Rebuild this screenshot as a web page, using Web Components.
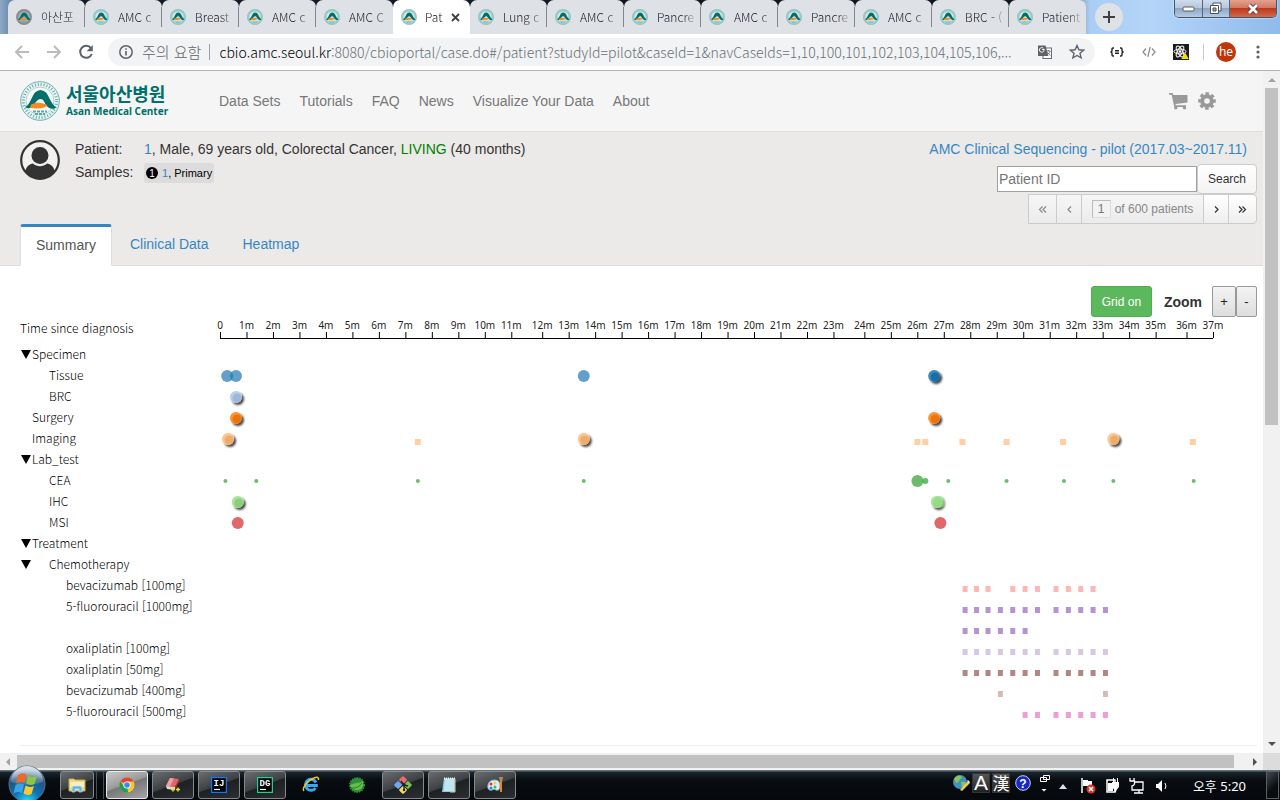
<!DOCTYPE html>
<html lang="ko">
<head>
<meta charset="utf-8">
<title>Patient 1 - cBioPortal</title>
<style>
html, body { margin: 0; height: 100%; overflow: hidden; }
body { font-family: "Liberation Sans", Arial, sans-serif; font-size: 14px; color: #333; }
</style>
</head>
<body>
<desktop-window></desktop-window>

<script>
const UI_FONT = '"Noto Sans", "Noto Sans CJK KR", sans-serif';
const KO_FONT = '"Noto Sans CJK KR", sans-serif';

function define(name, build) {
  customElements.define(name, class extends HTMLElement {
    constructor() {
      super();
      this.attachShadow({ mode: 'open' });
    }
    connectedCallback() {
      const t = document.createElement('template');
      t.innerHTML = '<style>*{box-sizing:border-box}svg{display:block;flex:none}</style>' + build(this);
      this.shadowRoot.replaceChildren(t.content.cloneNode(true));
    }
  });
}

/* ---------- hospital emblem ---------- */
define('amc-emblem', el => {
  const large = el.hasAttribute('large'), grey = el.hasAttribute('grey');
  return `
<style>:host{display:block;flex:none;width:16px;height:16px}:host([large]){width:40px;height:40px}svg{width:100%;height:100%}</style>
<svg viewBox="0 0 40 40" aria-hidden="true">
  <circle cx="20" cy="20" r="19.300" fill="${grey ? '#8f8f8f' : large ? '#eef5f4' : '#a9d0ce'}" stroke="${grey ? '#777' : '#6bb0ad'}" stroke-width="1"/>
  <circle cx="20" cy="20" r="16.600" fill="none" stroke="#3f9a97" stroke-width="3" stroke-dasharray="1.200 1.700" opacity="${large ? '.7' : '.25'}"/>
  <circle cx="20" cy="20" r="14" fill="${grey ? '#aaa' : large ? '#f5f8f8' : '#dcebea'}" stroke="#8cc3c0" stroke-width=".7"/>
  <path d="M13 30.500h14M15 33h10" stroke="#5aaba7" stroke-width="1.800" stroke-dasharray="3 1"/>
  <path d="M5 26C10 24 12 15 15 11.500Q20.500 6.500 26 11.500C29 15 31 23 36 26L35 27.500C31 28.500 28 27 26 24C24 21 23.500 18 20.500 18C17 18 15.500 22 13 25C11 27.500 8 28 5 26Z" fill="#00706c"/>
  <path d="M11 23.500C16 21 23 21 27.500 24.500C25 27.500 17 28 10 27Z" fill="#f58a1f"/>
</svg>`;
});

/* ---------- browser tab ---------- */
define('browser-tab', el => {
  const active = el.hasAttribute('active');
  return `
<style>
:host{display:block;flex:0 1 77px;min-width:0;height:34px}
.tab{height:34px;display:flex;align-items:center;gap:${active ? 8 : 9}px;padding:0 0 0 8px;border-radius:7px 7px 0 0;background:${active ? '#fff' : '#dee1e6'};position:relative;font:300 12px/16px ${KO_FONT};color:#202124}
.t{flex:1;min-width:0;white-space:nowrap;-webkit-mask-image:linear-gradient(90deg,#000 ${active ? 20 : 26}px,transparent 42px)}
.sep{position:absolute;right:0;top:7px;width:1px;height:20px;background:#80868b}
button{flex:none;border:0;background:none;padding:0;width:16px;height:16px;margin-right:7px;margin-left:-4px;display:grid;place-items:center}
</style>
<div class="tab" role="tab"><amc-emblem ${el.hasAttribute('grey') ? 'grey' : ''}></amc-emblem><span class="t"><slot></slot></span>
${active ? '<button aria-label="Close tab"><svg width="9" height="9" viewBox="0 0 9 9"><path d="M1 1l7 7M8 1l-7 7" stroke="#3c4043" stroke-width="1.800"/></svg></button>' : ''}
${el.hasAttribute('sep') ? '<i class="sep"></i>' : ''}</div>`;
});

define('tab-strip', () => {
  const tabs = ['아산포', 'AMC c', 'Breast', 'AMC c', 'AMC C', 'Pat', 'Lung c', 'AMC c', 'Pancre', 'AMC c', 'Pancre', 'AMC c', 'BRC - (', 'Patient'];
  return `
<style>
:host{display:flex;height:34px;flex:none;padding-left:8px;background:linear-gradient(90deg,#8ba8c8 0,#5c7898 16px,#141c2a 60px,#10141e 1040px,#a9cdf4 1090px,#b4d5f8 1150px,#8fbbea 100%)}
.new{width:28px;height:28px;border-radius:50%;border:0;background:#dee1e6;margin:3px 0 0 9px;padding:0;display:grid;place-items:center;flex:none}
.win{margin-left:auto;margin-right:3px;display:flex;height:18px;border:1px solid #45566b;border-top:0;border-radius:0 0 5px 5px;overflow:hidden;box-shadow:0 0 2px #fff}
.win button{border:0;border-right:1px solid #56677b;padding:0;display:grid;place-items:center;background:linear-gradient(#cfdceb,#b7c8dc 45%,#8fa7c2 50%,#b3cbe5)}
.win button:nth-child(1){width:28px}
.win button:nth-child(2){width:27px}
.win .x{width:46px;border-right:0;background:linear-gradient(#e3a18f,#d27a63 45%,#bb3a1b 50%,#d4684a)}
</style>
${tabs.map((t, i) => `<browser-tab ${i === 5 ? 'active' : ''} ${i === 0 ? 'grey' : ''} ${[4, 5, 13].includes(i) ? '' : 'sep'}>${t}</browser-tab>`).join('')}
<button class="new" aria-label="New tab"><svg width="14" height="14" viewBox="0 0 14 14"><path d="M7 1v12M1 7h12" stroke="#3c4043" stroke-width="2"/></svg></button>
<div class="win">
<button aria-label="Minimize"><svg width="14" height="6" viewBox="0 0 14 6"><rect x="1" y="1" width="11" height="4" rx="1" fill="#fff" stroke="#555c6b"/></svg></button>
<button aria-label="Restore"><svg width="14" height="13" viewBox="0 0 14 13"><g fill="#fff" stroke="#4b5363"><path d="M4 1h8v8h-8z"/><path d="M1.500 3.500h8v8h-8z"/><path d="M4 6h3v3h-3z" fill="#8fa7c2"/></g></svg></button>
<button class="x" aria-label="Close"><svg width="14" height="12" viewBox="0 0 14 12"><path d="M3 2l8 8M11 2l-8 8" stroke="#5b3038" stroke-width="4.500"/><path d="M3 2l8 8M11 2l-8 8" stroke="#fff" stroke-width="2.800"/></svg></button>
</div>`;
});

/* ---------- address bar ---------- */
define('address-bar', () => `
<style>
:host{display:flex;align-items:center;height:37px;flex:none;background:#fff;border-bottom:1px solid #b3b3b3;padding:0 12px 0 12px}
button{border:0;background:none;padding:0;width:20px;height:20px;display:grid;place-items:center;flex:none}
.nav{display:flex;gap:12px;margin-right:12px}
.box{flex:1;min-width:0;height:28px;border-radius:14px;background:#f1f3f4;display:flex;align-items:center;padding:0 8px 0 9px;font:300 14px/18px ${KO_FONT};color:#6b7075;white-space:nowrap}
.warn{font:300 15px/18px ${KO_FONT};margin-left:7px;color:#5f6368}
.bar{width:1px;height:16px;background:#9aa0a6;margin:0 9px 0 8px}
.url{flex:1;min-width:0;color:#6b7075;text-decoration:none}
.url b{font-weight:300;color:#000}
.in{display:flex;gap:12px;margin-left:12px}
.ext{display:flex;align-items:center;gap:12px;margin-left:12px}
.v{width:1px;height:16px;background:#ccc}
.ava{width:20px;height:20px;border-radius:50%;background:#bf360c;color:#fff;font:12px/20px ${UI_FONT};display:block;text-align:center}
</style>
<div class="nav">
<button aria-label="Back"><svg width="16" height="14" viewBox="0 0 16 14"><path d="M15 7H2M8 1L2 7l6 6" fill="none" stroke="#b9bbbe" stroke-width="2"/></svg></button>
<button aria-label="Forward"><svg width="16" height="14" viewBox="0 0 16 14"><path d="M1 7h13M8 1l6 6-6 6" fill="none" stroke="#b9bbbe" stroke-width="2"/></svg></button>
<button aria-label="Reload"><svg width="16" height="16" viewBox="0 0 16 16"><path d="M13 4.200A6 6 0 1 0 13.800 10" fill="none" stroke="#5f6368" stroke-width="2"/><path d="M14.800 1v6.200H8.600z" fill="#5f6368"/></svg></button>
</div>
<div class="box">
<svg width="18" height="18" viewBox="0 0 18 18"><circle cx="9" cy="9" r="6.200" fill="none" stroke="#5f6368" stroke-width="1.500"/><path d="M9 8v4.500M9 5.200v1.600" stroke="#5f6368" stroke-width="1.600"/></svg>
<span class="warn">주의 요함</span><i class="bar"></i>
<a class="url" href="#"><b>cbio.amc.seoul.kr</b>:8080/cbioportal/case.do#/patient?studyId=pilot&amp;caseId=1&amp;navCaseIds=1,10,100,101,102,103,104,105,106,...</a>
<div class="in">
<button aria-label="Translate"><svg width="16" height="16" viewBox="0 0 16 16"><rect x="6" y="4" width="8.500" height="10.500" fill="#fff" stroke="#6b6f74"/><path d="M1 1.500h7.500l3 10.500H1z" fill="#5f6368"/><path d="M7.500 5.500H5.200M7 5.500A2.300 2.300 0 1 1 6.300 4.200" fill="none" stroke="#fff"/><path d="M9.500 7h4M11.500 6v1M13 7c-.5 2-1.500 3-3 4M10.500 8.500l3 3" stroke="#6b6f74" fill="none" stroke-width=".9"/></svg></button>
<button aria-label="Bookmark"><svg width="16" height="16" viewBox="0 0 16 16"><path d="M8 1.500l1.900 4.300 4.700.4-3.600 3.100 1.100 4.600L8 11.500l-4.100 2.400L5 9.300 1.400 6.200l4.700-.4z" fill="none" stroke="#5f6368" stroke-width="1.400"/></svg></button>
</div>
</div>
<div class="ext">
<button aria-label="JSON viewer"><svg width="14" height="10" viewBox="0 0 14 10"><path d="M4 1H3q-1 0-1 1v2L1 5l1 1v2q0 1 1 1h1M10 1h1q1 0 1 1v2l1 1-1 1v2q0 1-1 1h-1M5 3.700h4M5 6.300h4" fill="none" stroke="#222" stroke-width="1.400"/></svg></button>
<button aria-label="Source"><svg width="14" height="10" viewBox="0 0 14 10"><path d="M4 1.500L1 5l3 3.500M10 1.500L13 5l-3 3.500M8.200 0L5.800 10" fill="none" stroke="#888" stroke-width="1.200"/></svg></button>
<button aria-label="React tools"><svg width="16" height="16" viewBox="0 0 16 16"><path d="M0 0h16v16H0z" fill="#1b1b1b"/><g fill="none" stroke="#fff" transform="translate(7 7.500)"><ellipse rx="6" ry="2.400"/><ellipse rx="6" ry="2.400" transform="rotate(60)"/><ellipse rx="6" ry="2.400" transform="rotate(120)"/></g><circle cx="7" cy="7.500" r="1.300" fill="#fff"/><path d="M12 8.500l3.800 6.500H8.400z" fill="#f5e000"/></svg></button>
<i class="v"></i>
<button class="ava">he</button>
<button aria-label="Menu"><svg width="4" height="16" viewBox="0 0 4 16" fill="#5f6368"><circle cx="2" cy="3" r="1.600"/><circle cx="2" cy="8" r="1.600"/><circle cx="2" cy="13" r="1.600"/></svg></button>
</div>`);

/* ---------- portal header ---------- */
define('portal-header', () => `
<style>
:host{display:flex;align-items:center;height:61px;background:#f5f5f5;border-bottom:1px solid #ddd;padding:0 47px 0 20px}
.logo{display:flex;align-items:center;gap:6px;width:199px;text-decoration:none;color:#00706c;font-family:${KO_FONT};font-weight:700}
.logo span{display:block;white-space:nowrap}
.ko{font-size:18px;line-height:20px}
.en{font-family:"Noto Sans",sans-serif;font-size:10px;line-height:16px}
nav{display:flex;gap:19px;flex:1}
nav a{color:#777;text-decoration:none;line-height:20px;white-space:nowrap}
.r{display:flex;gap:10px}
button{border:0;background:none;padding:0}
</style>
<a class="logo" href="#"><amc-emblem large></amc-emblem><div><span class="ko">서울아산병원</span><span class="en">Asan Medical Center</span></div></a>
<nav>${['Data Sets', 'Tutorials', 'FAQ', 'News', 'Visualize Your Data', 'About'].map(t => `<a href="#">${t}</a>`).join('')}</nav>
<div class="r">
<button aria-label="Cart"><svg width="19" height="18" viewBox="0 0 19 18" fill="#999"><path d="M0 1h3.800l.5 2H18.500v7.500L6.500 12l.3 1.200H17V15H5.300L2.600 2.800H0z"/><circle cx="6.800" cy="15.800" r="1.700"/><circle cx="15.500" cy="15.800" r="1.700"/></svg></button>
<button aria-label="Settings"><svg width="18" height="18" viewBox="0 0 18 18"><circle cx="9" cy="9" r="4.800" fill="none" stroke="#999" stroke-width="4"/><circle cx="9" cy="9" r="7.400" fill="none" stroke="#999" stroke-width="2.800" stroke-dasharray="3.400 2.410" transform="rotate(-13 9 9)"/></svg></button>
</div>`);

/* ---------- patient header ---------- */
define('patient-pager', () => {
  const icon = d => `<svg width="9" height="9" viewBox="0 0 9 9"><path d="${d}" fill="none" stroke="currentColor" stroke-width="1.200"/></svg>`;
  return `
<style>
:host{display:flex;font-size:12px;color:#777}
.s{height:30px;border:1px solid #ccc;margin-left:-1px;background:linear-gradient(#fff,#eee);display:flex;align-items:center;justify-content:center;padding:0;font:inherit;color:#333}
.s.off{background:linear-gradient(#f6f6f6,#ebebeb);color:#888}
.a{width:29px}.b{width:26px}
.s:first-child{border-radius:4px 0 0 4px}.s:last-child{border-radius:0 4px 4px 0}
.m{width:123px;gap:4px}
input{width:19px;height:18px;border:1px solid #bbb;border-right-color:#ddd;border-bottom-color:#ddd;background:#f2f2f2;font:inherit;color:#777;text-align:center;padding:0}
label{white-space:nowrap}
</style>
<button class="s a off" aria-label="First">${icon('M4.500 1.500l-3 3 3 3M8 1.500l-3 3 3 3')}</button><button class="s b off" aria-label="Previous">${icon('M6 1.500l-3 3 3 3')}</button>
<div class="s m off"><input id="n" value="1"><label for="n">of 600 patients</label></div>
<button class="s b" aria-label="Next">${icon('M3 1.500l3 3-3 3')}</button><button class="s a" aria-label="Last">${icon('M1 1.500l3 3-3 3M4.500 1.500l3 3-3 3')}</button>`;
});

define('patient-header', () => `
<style>
:host{display:flex;flex-direction:column;height:134px;background:#ebeae9;border-bottom:1px solid #ddd;padding:8px 6px 0 20px}
.top{display:flex;height:84px;gap:15px}
.info{display:grid;grid-template-columns:69px auto;grid-template-rows:23px 23px;height:48px;line-height:18px;white-space:nowrap}
a{color:#3786c2;text-decoration:none}
.live{color:green}
.chip{display:inline-flex;align-items:center;gap:4px;height:20px;padding:0 2px;background:#dcdcdc;border-radius:3px;font-size:11px;color:#000}
.right{margin-left:auto;display:flex;flex-direction:column;align-items:flex-end;line-height:18px}
.title{margin-right:10px;height:24px}
form{display:flex;align-items:center}
input{width:200px;height:26px;border:1px solid #a0a0a0;padding:0 1px;font:14px "Liberation Sans",sans-serif;margin:0}
input::placeholder{color:#757575}
.go{width:60px;height:30px;border:1px solid #ccc;border-radius:4px;background:linear-gradient(#fff,#f3f3f3);font:12px "Liberation Sans",sans-serif;color:#333;padding:0}
.tabs{display:flex;height:42px}
.tabs a{padding:12px 17px 0 15px;line-height:16px;border:1px solid transparent;border-top:0;height:42px;white-space:nowrap}
.tabs a.on{color:#555;background:#fff;border-color:#ddd;border-bottom-color:#fff;border-top:3px solid #3786c2;border-radius:3px 3px 0 0;padding-top:10px;padding-right:15px;margin-right:2px}
</style>
<div class="top">
<svg width="40" height="40" viewBox="0 0 40 40"><defs><clipPath id="c"><circle cx="20" cy="20" r="19"/></clipPath></defs><circle cx="20" cy="20" r="18.800" fill="#fff" fill-opacity=".35" stroke="#333" stroke-width="2.200"/><g clip-path="url(#c)" fill="#333"><circle cx="20" cy="15.500" r="8.500"/><path d="M4 40c0-10 3-15.500 9-16.500 4 3.500 10 3.500 14 0 6 1 9 6.500 9 16.500z"/></g></svg>
<div class="info"><span>Patient:</span><span><a href="#">1</a>, Male, 69 years old, Colorectal Cancer, <span class="live">LIVING</span> (40 months)</span>
<span>Samples:</span><span><span class="chip"><svg width="12" height="12" viewBox="0 0 12 12"><circle cx="6" cy="6" r="6"/><text x="6" y="10" text-anchor="middle" fill="#fff" font-size="10" font-family="Liberation Sans">1</text></svg><span><a href="#">1</a>, Primary</span></span></span></div>
<div class="right"><a class="title" href="#">AMC Clinical Sequencing - pilot (2017.03~2017.11)</a>
<form onsubmit="return false"><input aria-label="Patient ID" placeholder="Patient ID"><button class="go">Search</button></form>
<patient-pager></patient-pager></div>
</div>
<nav class="tabs"><a class="on" href="#">Summary</a><a href="#">Clinical Data</a><a href="#">Heatmap</a></nav>`);

/* ---------- timeline ---------- */
const CYCLES = [843, 856, 869, 883, 897, 911, 925, 946, 960, 974, 988, 1002];
const dot = (...days) => days.map(day => ({ day, r: 6 }));
const small = (...days) => days.map(day => ({ day, r: 2 }));
const raised = (...days) => days.map(day => ({ day, r: 6, raised: true }));
const square = (w, ...days) => days.map(day => ({ day, w }));
const TRACKS = [
  { label: 'Specimen', open: true },
  { label: 'Tissue', level: 1, color: '#1f77b4', marks: [...dot(7, 17, 411), ...raised(808)] },
  { label: 'BRC', level: 1, color: '#aec7e8', marks: raised(17) },
  { label: 'Surgery', color: '#ff7f0e', marks: raised(17, 808) },
  { label: 'Imaging', color: '#ffbb78', marks: [...raised(8, 411, 1011), ...square(6, 223, 789, 798, 840, 890, 954, 1101)] },
  { label: 'Lab_test', open: true },
  { label: 'CEA', level: 1, color: '#2ca02c', marks: [...small(5, 40, 223, 411, 824, 890, 955, 1011, 1102), { day: 789, r: 6 }, { day: 798, r: 3 }] },
  { label: 'IHC', level: 1, color: '#98df8a', marks: [...raised(19, 811), ...dot(814)] },
  { label: 'MSI', level: 1, color: '#d62728', marks: dot(19, 815) },
  { label: 'Treatment', open: true },
  { label: 'Chemotherapy', level: 1, open: true },
  { label: 'bevacizumab [100mg]', level: 2, color: '#ff9896', marks: square(5, ...CYCLES.filter(d => d !== 883 && d !== 1002)) },
  { label: '5-fluorouracil [1000mg]', level: 2, color: '#9467bd', marks: square(5, ...CYCLES) },
  { label: '', level: 2, color: '#9467bd', marks: square(5, ...CYCLES.slice(0, 6)) },
  { label: 'oxaliplatin [100mg]', level: 2, color: '#c5b0d5', marks: square(5, ...CYCLES) },
  { label: 'oxaliplatin [50mg]', level: 2, color: '#8c564b', marks: square(5, ...CYCLES) },
  { label: 'bevacizumab [400mg]', level: 2, color: '#c49c94', marks: square(5, 883, 1002) },
  { label: '5-fluorouracil [500mg]', level: 2, color: '#e377c2', marks: square(5, ...CYCLES.slice(5)) }
];
const ROW = 21, HEAD = 27, LAST_DAY = 1125;
const pct = day => (day / LAST_DAY * 100).toFixed(3) + '%';

function axis() {
  let s = '';
  for (let m = 0; m <= 37; m++) {
    const x = pct(365 * Math.floor(m / 12) + 30 * (m % 12));
    s += `<svg class="o" x="${x}" y="0" width="1" height="24"><rect x="0" y="15" width="1" height="6"/><text x="0" y="12">${m ? m + 'm' : 0}</text></svg>`;
  }
  return s + '<rect x="0" y="21" width="100%" height="1"/>';
}
function marks() {
  const body = TRACKS.map((t, i) => (t.marks || []).map(m => {
    const y = HEAD + ROW * i + 11;
    if (m.w) return `<svg class="o" x="${pct(m.day)}" y="${y}"><rect x="${-m.w / 2}" y="0" width="${m.w}" height="6" fill="${t.color}" opacity=".7"/></svg>`;
    if (m.raised) return `<svg class="o" x="${pct(m.day)}" y="${y}"><g filter="url(#sh)"><circle r="6" fill="${t.color}"/></g><circle r="6" fill="#fff" opacity=".15"/><g filter="url(#soft)"><circle cx="1" cy="1" r="4.500" fill="${t.color}"/><circle cx="1" cy="1" r="4.500" opacity=".08"/></g></svg>`;
    return `<circle cx="${pct(m.day)}" cy="${y}" r="${m.r}" fill="${t.color}" opacity=".7"/>`;
  }).join('')).join('');
  return `<g transform="translate(1 0)">${body}</g>`;
}

define('patient-timeline', () => `
<style>
:host{display:block;background:#fff;padding:20px 6px 0 20px}
.tools{display:flex;justify-content:flex-end;align-items:center;height:31px}
button{font:14px "Liberation Sans",sans-serif;padding:0}
.grid{width:61px;height:31px;border:1px solid #4cae4c;border-radius:3px;background:#5cb85c;color:#fff;font-size:12px}
b{margin:0 10px 0 12px;font-size:14px}
.z{height:31px;border:1px solid #999;border-radius:2px;background:linear-gradient(#f4f4f4,#ddd);color:#222;font-size:13px}
.z1{width:24px}.z2{width:21px}
.chart{display:grid;grid-template-columns:200px 1fr;padding-right:44px;font-family:${UI_FONT};color:#000}
ul{list-style:none;margin:0;padding:0;font:300 12px ${KO_FONT};white-space:nowrap}
li{height:21px;line-height:19px;display:flex}
li.h{height:27px;line-height:21px}
.tw{width:12px;height:21px;border:0;background:none;display:grid;place-items:center;flex:none}
.l1{padding-left:17px}.l2{padding-left:34px}
.plot{width:100%;height:405px;overflow:visible}
.o{overflow:visible}
text{font-size:10px;text-anchor:middle;fill:#222}
hr{border:0;border-top:1px solid #eee;margin:23px 0 7px}
</style>
<div class="tools"><button class="grid">Grid on</button><b>Zoom</b><button class="z z1">+</button><button class="z z2">-</button></div>
<div class="chart">
<ul><li class="h">Time since diagnosis</li>${TRACKS.map(t => `<li>${t.open ? '<button class="tw" aria-label="Collapse"><svg width="10" height="9" viewBox="0 0 10 9"><path d="M0 0h10L5 9z"/></svg></button>' : '<i class="tw"></i>'}<span class="l${t.level || 0}">${t.label}</span></li>`).join('')}</ul>
<svg class="plot" role="img" aria-label="Timeline"><defs><filter id="sh" x="-50%" y="-50%" width="220%" height="220%"><feDropShadow dx="2" dy="2" stdDeviation="1.200" flood-color="#000" flood-opacity=".75"/></filter><filter id="soft" x="-30%" y="-30%" width="160%" height="160%"><feGaussianBlur stdDeviation=".7"/></filter></defs>${axis()}${marks()}</svg>
</div>
<hr>`);

/* ---------- scroll bars ---------- */
define('scroll-bar', el => {
  const v = el.hasAttribute('vertical');
  const tri = d => `<svg width="17" height="17" viewBox="0 0 17 17"><path d="${d}"/></svg>`;
  return `
<style>
:host{display:flex;flex:none;background:#f1f1f1;${v ? 'flex-direction:column;width:17px' : 'height:17px'}}
.t{flex:1;min-height:0;min-width:0;display:flex;${v ? 'justify-content:center' : 'align-items:center'}}
.k{background:#c1c1c1;${v ? 'width:13px;height:52%' : 'height:13px;width:99%'}}
.lo path{fill:#a3a3a3}.hi path{fill:#505050}
.c{width:17px;background:#dcdcdc}
</style>
<div class="lo">${tri(v ? 'M5 11h8L9 7z' : 'M10 5v8L6 9z')}</div><div class="t"><div class="k"></div></div><div class="hi">${tri(v ? 'M5 6h8L9 10z' : 'M7 5v8l4-4z')}</div>${v ? '' : '<div class="c"></div>'}`;
});

/* ---------- taskbar ---------- */
define('task-button', el => `
<style>
:host{display:block;flex:none}
button{display:grid;place-items:center;width:${el.getAttribute('w') || 42}px;height:28px;padding:0;
${el.hasAttribute('plain') ? 'border:0;background:none' : el.hasAttribute('active') ? 'border:1px solid #e6e8ea;border-radius:3px;background:linear-gradient(160deg,#c8c8c8,#9a9a9a 45%,#777 50%,#a5a5a5)' : 'border:1px solid #85898c;border-radius:3px;background:linear-gradient(160deg,#696d70,#3d4144 48%,#1e2124 52%,#2c2f32)'}}
</style><button aria-label="${el.getAttribute('name')}"><slot></slot></button>`);

define('task-bar', () => {
  const box = (c, t) => `<svg width="16" height="16" viewBox="0 0 16 16"><rect x=".5" y=".5" width="15" height="15" fill="#000" stroke="${c}" stroke-width="1.500"/><text x="2.500" y="9" fill="#fff" font-size="9" font-weight="700" font-family="Liberation Mono">${t}</text><path d="M3 12.500h6" stroke="#fff" stroke-width="1.200"/></svg>`;
  return `
<style>
:host{display:flex;height:30px;flex:none;background:linear-gradient(#65727a 0,#65727a 1px,#1a252c 2px,#080d12 10px,#05080c);align-items:center;color:#fff}
.orb{border:0;background:none;padding:0;width:40px;height:30px;margin:0 12px 0 8px}
.orb svg{overflow:visible;margin-top:-5px}
.stk{width:8px;height:28px;border:1px solid #4a4e52;border-width:0 1px;margin:0 2px}
.g{display:flex;gap:4px}
.tray{margin-left:auto;display:flex;align-items:center;height:30px}
.k{width:18px;height:20px;border:1px solid #333;background:linear-gradient(#555,#222);font:17px/18px ${KO_FONT};margin-right:2px;white-space:nowrap;display:flex;justify-content:center;margin-bottom:4px}
.k.a{font:21px/18px "Liberation Sans",sans-serif}
time{font:13px/18px ${UI_FONT};margin:2px 20px 0 22px;white-space:nowrap}
.sd{width:13px;height:28px;border:1px solid #5a5f64;background:linear-gradient(135deg,#444b50,#0a0d10 60%);padding:0;margin-right:1px}
</style>
<button class="orb" aria-label="Start"><svg width="38" height="38" viewBox="0 0 38 38"><defs><radialGradient id="o" cx=".5" cy="1" r=".9"><stop offset="0" stop-color="#2fe0ff"/><stop offset=".4" stop-color="#0d74b4"/><stop offset=".8" stop-color="#24517d"/><stop offset="1" stop-color="#7d9fbd"/></radialGradient><linearGradient id="gl" x2="0" y2="1"><stop stop-color="#fff" stop-opacity=".75"/><stop offset="1" stop-color="#fff" stop-opacity=".1"/></linearGradient></defs><circle cx="19" cy="19" r="18" fill="url(#o)" stroke="#5b7589"/><path d="M3 17A16 16 0 0 1 35 17Q19 23 3 17z" fill="url(#gl)"/><path d="M10 10q4-3 8.500-.5l-2 8.500q-4-2-8.500.5z" fill="#ee6a2c"/><path d="M20 10.500q4 2.500 9 .5l-2.500 8q-4.500 2-8.500-.5z" fill="#8ec641"/><path d="M7.500 20q4.500-2.500 8.500-.5l-2 8.500q-4-2-8.500.5z" fill="#39a3e6"/><path d="M17.500 20.500q4 2.500 8.500.5l-2.500 8q-4 2-8-.5z" fill="#fcc82e"/></svg></button>
<task-button name="Explorer" w="34"><svg width="18" height="16" viewBox="0 0 18 16"><path d="M1 2h5l1 1h10v11H1z" fill="#f0d88a" stroke="#c9a94e"/><path d="M2 5h14v5H2z" fill="#fbeeb9"/><path d="M4 15v-4q0-2 2-2h6q2 0 2 2v4h-3v-3H7v3z" fill="#5fb4e8" stroke="#c8e6f8" stroke-width=".7"/></svg></task-button><i class="stk"></i>
<div class="g">
<task-button name="Chrome" active><svg width="16" height="16" viewBox="0 0 16 16"><circle cx="8" cy="8" r="7.500" fill="#f7c928"/><path d="M8 8L1.500 4.200A7.500 7.500 0 0 1 14.600 4.500H8z" fill="#dc4437"/><path d="M8 8l1 7.500A7.500 7.500 0 0 1 1.500 4.200L5 9.500z" fill="#1e9e58"/><circle cx="8" cy="8" r="3.600" fill="#fff"/><circle cx="8" cy="8" r="2.800" fill="#4285f4"/></svg></task-button>
<task-button name="Dictionary"><svg width="16" height="16" viewBox="0 0 16 16"><path d="M5 1l9 1-4 8-9-1z" fill="#e0646a"/><path d="M5 1l4 .4L5 9.500 1 9z" fill="#f0a0a2"/><path d="M1 9l9 1v3l-8-1z" fill="#ddd"/><path d="M14 2v3l-4 8v-3z" fill="#a33"/><path d="M8 10.500v4M6 12.500h4M13 10.500v4M11 12.500h4" stroke="#dbe52e" stroke-width="1.500"/></svg></task-button>
<task-button name="IntelliJ">${box('#1477f5', 'IJ')}</task-button>
<task-button name="DataGrip">${box('#22d08a', 'DG')}</task-button>
<task-button name="Internet Explorer" plain><svg width="18" height="18" viewBox="0 0 18 18"><path d="M14 6.500A5.500 5.500 0 1 0 13.500 12M4 9.500h10.300V8" fill="none" stroke="#39a8ee" stroke-width="3"/><path d="M2 15C-1 13 6 4 12 2q5-2 4.500 2" fill="none" stroke="#f5c52c" stroke-width="1.500"/></svg></task-button>
<task-button name="Spring" plain><svg width="18" height="18" viewBox="0 0 18 18"><circle cx="9" cy="9" r="7" fill="#2f8f3c" stroke="#2f8f3c" stroke-width="2" stroke-dasharray="1.500 1"/><path d="M2 9q5-2 7-2 4 0 6-2 1 9-6 9-5 0-7-5z" fill="#62c04a"/><path d="M3 12q7 1 11-5" fill="none" stroke="#2a7d32"/></svg></task-button>
<task-button name="Git"><svg width="18" height="18" viewBox="0 0 18 18"><g transform="rotate(45 9 9)"><rect x="2.500" y="2.500" width="6" height="6" rx="1" fill="#f0696b"/><rect x="9.500" y="2.500" width="6" height="6" rx="1" fill="#7ac250"/><rect x="2.500" y="9.500" width="6" height="6" rx="1" fill="#6ea8f0"/><rect x="9.500" y="9.500" width="6" height="6" rx="1" fill="#f2e05a"/></g><path d="M7 5l3 4v5M10 9l4 1" stroke="#222" stroke-width="1.300" fill="none"/><circle cx="10" cy="8.500" r="1.500" fill="#222"/><circle cx="10" cy="14" r="1.300" fill="#222"/></svg></task-button>
<task-button name="Notepad"><svg width="16" height="16" viewBox="0 0 16 16"><path d="M3 1h11v14H1z" fill="#8ecde0"/><path d="M4 2h9v12H3z" fill="#bfe5ee"/><path d="M3 1.500h12" stroke="#eee" stroke-width="2" stroke-dasharray="1 1"/><path d="M14 2v13H9" stroke="#d8c9a0" fill="none"/></svg></task-button>
<task-button name="Paint"><svg width="18" height="18" viewBox="0 0 18 18"><path d="M2 9q1-5 7-5 5 0 5 6 0 5-4 4-2-2-4 0-5 1-4-5z" fill="#dceefa" stroke="#8db8d8"/><circle cx="5" cy="8" r="1.500" fill="#e33"/><circle cx="9" cy="7" r="1.500" fill="#fc3"/><circle cx="5" cy="12" r="1.500" fill="#38c"/><circle cx="9" cy="11" r="1.500" fill="#4b4"/><path d="M13 1h4l-1 5h-2z" fill="#b88b5a"/><path d="M14 6h2v10h-2z" fill="#f08020"/></svg></task-button>
</div>
<div class="tray">
<svg width="18" height="18" viewBox="0 0 18 18" style="margin:0 2px 4px 0"><circle cx="8" cy="8" r="7" fill="#3d93b8"/><path d="M2 5q3-5 7-3 2 2-1 3-1 4-4 4zM9 8q4-1 5 1-2 5-4 5z" fill="#8cc060"/><path d="M8 16l8-9 2 2-8 8z" fill="#f3cc55"/><path d="M15 7l1-1 2 2-1 1z" fill="#eee"/></svg>
<span class="k a">A</span><span class="k">漢</span>
<svg width="16" height="16" viewBox="0 0 16 16" style="margin:0 0 4px 3px"><circle cx="8" cy="8" r="7.300" fill="#1527c4" stroke="#cfd3e8"/><text x="8" y="12.500" text-anchor="middle" font-size="12" font-weight="700" fill="#fff" font-family="Liberation Sans">?</text></svg>
<svg width="14" height="26" viewBox="0 0 14 26" style="margin:0 0 0 8px" fill="none" stroke="#fff"><path d="M4.500 3.500h6v4h-6zM1.500 5.500h6v4h-6z"/><path d="M2.500 17h5L5 19.500z" fill="#fff" stroke="none"/></svg>
<svg width="8" height="5" viewBox="0 0 8 5" style="margin:2px 12px 0 6px"><path d="M0 5h8L4 0z" fill="#dde"/></svg>
<svg width="92" height="18" viewBox="0 0 92 18" style="margin-top:2px" fill="none" stroke="#fff"><path d="M3 1v15" stroke-width="1.500"/><path d="M4 3h5v1h4v6H9V9H4z" fill="#fff" stroke="none"/><circle cx="12" cy="12" r="4.500" fill="#d8322a" stroke="none"/><path d="M10 10l4 4M14 10l-4 4" stroke-width="1.500"/><path d="M28 3h8v12h-8z" stroke-width="1.500"/><path d="M29 6h5v8h-5zM33 5h7v5q-3 3-3 5h-1q0-2-3-5zM34 1h1v4h-1zM38 1h1v4h-1z" fill="#fff" stroke="none"/><path d="M56 5h8v8H54M60 13v3M55 16h9M51 1v3M55 1v3M50.500 4h5v3q-1 2-2.500 2v4h2" stroke-width="1.300"/><path d="M77 7h2l4-4v12l-4-4h-2z" fill="#fff" stroke="none"/><path d="M86 6q2 3 0 6"/></svg>
<time>오후 5:20</time><button class="sd" aria-label="Show desktop"></button>
</div>`;
});

/* ---------- whole window ---------- */
define('desktop-window', () => `
<style>
:host{display:flex;flex-direction:column;height:100vh;background:#fff}
.view{flex:1;min-height:0;display:flex}
main{flex:1;min-width:0;overflow:hidden}
</style>
<tab-strip></tab-strip><address-bar></address-bar>
<div class="view"><main><portal-header></portal-header><patient-header></patient-header><patient-timeline></patient-timeline></main><scroll-bar vertical></scroll-bar></div>
<scroll-bar></scroll-bar><task-bar></task-bar>`);
</script>
</body>
</html>
